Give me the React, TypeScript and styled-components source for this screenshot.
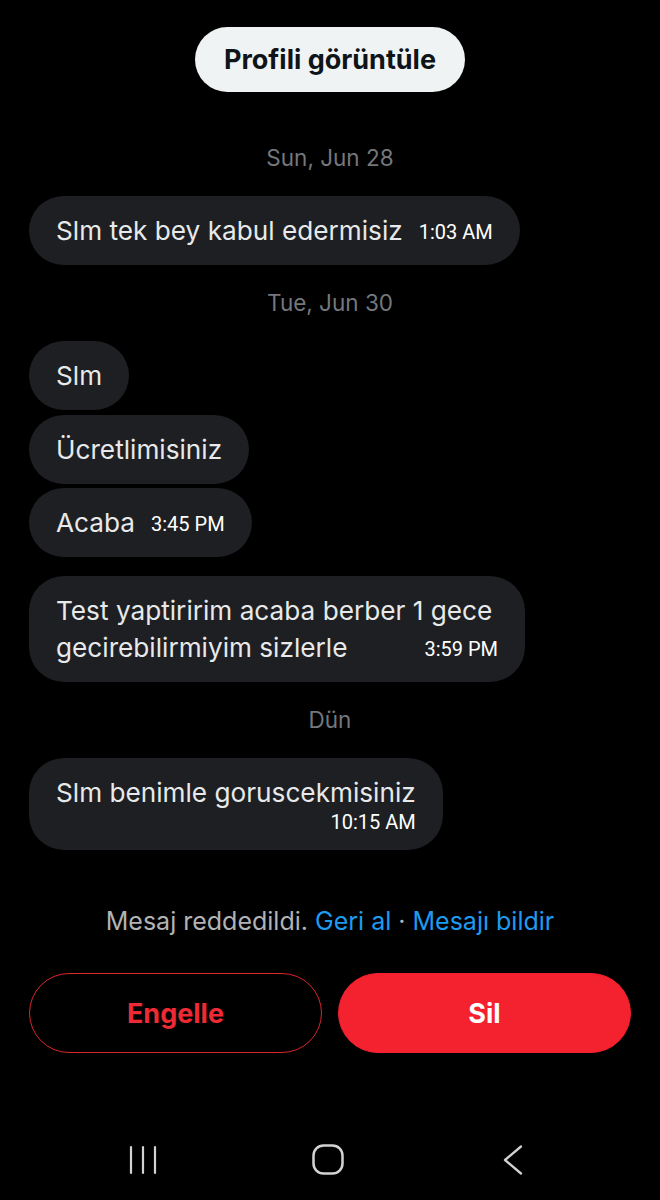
import React from 'react';
import styled, { createGlobalStyle } from 'styled-components';

const GlobalStyle = createGlobalStyle`
  html, body { margin: 0; padding: 0; background: #000; }
  body { font-family: Inter, "Noto Sans", sans-serif; -webkit-font-smoothing: antialiased; }
  * { box-sizing: border-box; }
`;

const Screen = styled.div`
  width: 660px;
  height: 1200px;
  background: #000;
  display: flex;
  flex-direction: column;
  overflow: hidden;
`;

const Thread = styled.main`
  display: flex;
  flex-direction: column;
  padding: 27px 29px 0 29px;
`;

const ProfileButton = styled.button`
  align-self: center;
  height: 65px;
  padding: 0 29px;
  margin-bottom: 28px;
  border-radius: 33px;
  border: none;
  background: #eff3f4;
  color: #0f1419;
  font: 700 27px Inter, sans-serif;
`;

const DateLabel = styled.div`
  text-align: center;
  color: #74777c;
  font-size: 22.5px;
  line-height: 28px;
  padding: 24px 0 24px;
`;

const Group = styled.div<{ $gapBefore?: boolean }>`
  display: flex;
  flex-direction: column;
  align-items: flex-start;
  gap: 4.5px;
  margin-top: ${(p) => (p.$gapBefore ? '19px' : '0')};
`;

const Bubble = styled.div`
  max-width: 496px;
  background: #1e1f22;
  border-radius: 35px;
  padding: 16px 27px 16px 27px;
  color: #e7e9ea;
  font-size: 26.2px;
  line-height: 37px;
`;

const InlineTime = styled.span`
  float: right;
  margin-left: 16px;
  padding-top: 3px;
  line-height: 34px;
  font-family: Roboto, "Liberation Sans", sans-serif;
  font-size: 20px;
  color: #ffffff;
`;

const BlockTime = styled.div`
  text-align: right;
  line-height: 23px;
  font-family: Roboto, "Liberation Sans", sans-serif;
  font-size: 20px;
  color: #ffffff;
`;

const Notice = styled.p`
  margin: 56px 0 0;
  text-align: center;
  font-size: 25px;
  line-height: 30px;
  color: #b1b3b5;
`;

const Link = styled.span`
  color: #1d9bf0;
`;

const Actions = styled.div`
  display: grid;
  grid-template-columns: 1fr 1fr;
  gap: 16px;
  margin-top: 37px;
`;

const ActionButton = styled.button<{ $filled?: boolean }>`
  height: 80px;
  border-radius: 40px;
  font: 700 27px Inter, sans-serif;
  border: 1.5px solid ${(p) => (p.$filled ? '#f4212e' : '#d8262f')};
  background: ${(p) => (p.$filled ? '#f4212e' : 'transparent')};
  color: ${(p) => (p.$filled ? '#ffffff' : '#ee2a35')};
`;

const NavBar = styled.nav`
  margin-top: auto;
  height: 80px;
  display: flex;
  align-items: center;
  justify-content: center;
  gap: 145px;
  padding-right: 4px;
`;

const NavIcon = styled.div`
  width: 40px;
  height: 40px;
  display: flex;
  align-items: center;
  justify-content: center;
`;

type Msg = { text: string; time?: string; below?: boolean };

const Message: React.FC<Msg> = ({ text, time, below }) => (
  <Bubble>
    {time && !below && <InlineTime>{time}</InlineTime>}
    {text}
    {time && below && <BlockTime>{time}</BlockTime>}
  </Bubble>
);

const Wrapped: React.FC<{ text: string; time: string }> = ({ text, time }) => (
  <Bubble>
    {text}
    <InlineTime>{time}</InlineTime>
  </Bubble>
);

export default function App() {
  return (
    <Screen>
      <GlobalStyle />
      <Thread>
        <ProfileButton>Profili görüntüle</ProfileButton>

        <DateLabel>Sun, Jun 28</DateLabel>
        <Group>
          <Message text="Slm tek bey kabul edermisiz" time="1:03 AM" />
        </Group>

        <DateLabel>Tue, Jun 30</DateLabel>
        <Group>
          <Message text="Slm" />
          <Message text="Ücretlimisiniz" />
          <Message text="Acaba" time="3:45 PM" />
        </Group>
        <Group $gapBefore>
          <Wrapped text="Test yaptiririm acaba berber 1 gece gecirebilirmiyim sizlerle" time="3:59 PM" />
        </Group>

        <DateLabel>Dün</DateLabel>
        <Group>
          <Message text="Slm benimle goruscekmisiniz" time="10:15 AM" below />
        </Group>

        <Notice>
          Mesaj reddedildi. <Link>Geri al</Link> · <Link>Mesajı bildir</Link>
        </Notice>

        <Actions>
          <ActionButton>Engelle</ActionButton>
          <ActionButton $filled>Sil</ActionButton>
        </Actions>
      </Thread>

      <NavBar>
        <NavIcon>
          <svg width="30" height="30" viewBox="0 0 30 30" fill="none" stroke="#d2d2d2" strokeWidth="2.2" strokeLinecap="round">
            <line x1="3" y1="2" x2="3" y2="28" />
            <line x1="15" y1="2" x2="15" y2="28" />
            <line x1="27" y1="2" x2="27" y2="28" />
          </svg>
        </NavIcon>
        <NavIcon>
          <svg width="32" height="32" viewBox="0 0 32 32" fill="none" stroke="#d2d2d2" strokeWidth="2.5">
            <rect x="1.5" y="1.5" width="29" height="28" rx="10" />
          </svg>
        </NavIcon>
        <NavIcon>
          <svg width="22" height="30" viewBox="0 0 22 30" fill="none" stroke="#d2d2d2" strokeWidth="2.3" strokeLinecap="round" strokeLinejoin="round">
            <polyline points="19,1.5 3,15 19,28.5" />
          </svg>
        </NavIcon>
      </NavBar>
    </Screen>
  );
}
